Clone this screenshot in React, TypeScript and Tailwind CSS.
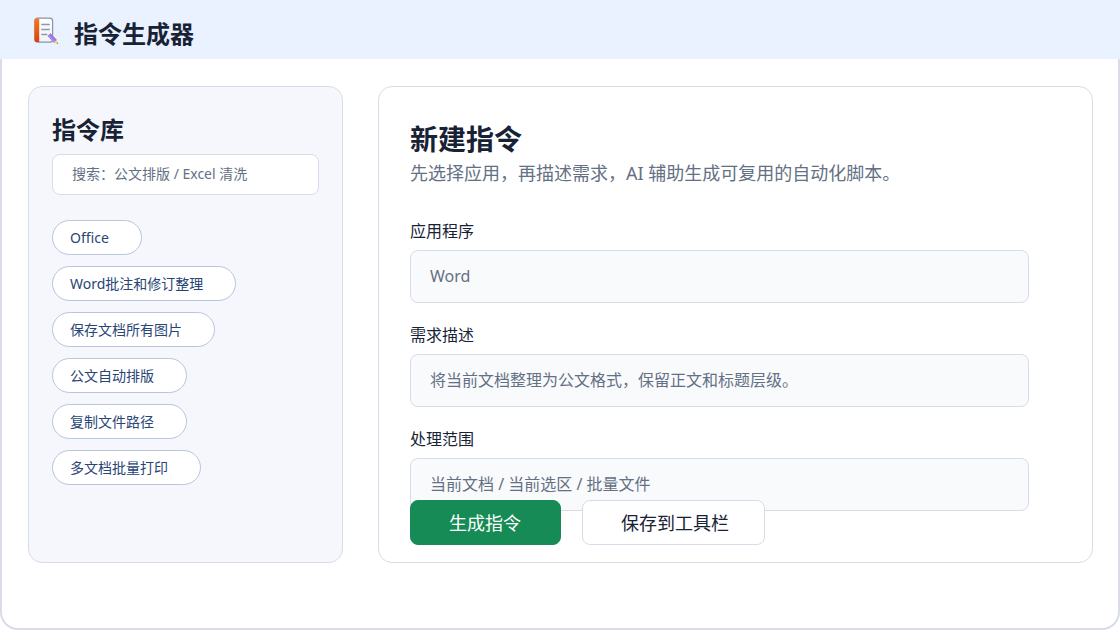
const presets = [
  'Office',
  'Word批注和修订整理',
  '保存文档所有图片',
  '公文自动排版',
  '复制文件路径',
  '多文档批量打印',
];

const fields = [
  { id: 'app', label: '应用程序', placeholder: 'Word' },
  { id: 'requirement', label: '需求描述', placeholder: '将当前文档整理为公文格式，保留正文和标题层级。' },
  { id: 'scope', label: '处理范围', placeholder: '当前文档 / 当前选区 / 批量文件' },
];

function NotebookIcon() {
  return (
    <svg width="28" height="28" viewBox="0 0 28 28" fill="none" aria-hidden="true">
      <defs>
        <linearGradient id="spine" x1="2" y1="2" x2="6" y2="26" gradientUnits="userSpaceOnUse">
          <stop stopColor="#fb7a1c" />
          <stop offset="1" stopColor="#dc3f08" />
        </linearGradient>
        <linearGradient id="paper" x1="6" y1="2" x2="20" y2="26" gradientUnits="userSpaceOnUse">
          <stop stopColor="#ffffff" />
          <stop offset="1" stopColor="#edf1f7" />
        </linearGradient>
      </defs>
      <rect x="2.8" y="2.200" width="17.8" height="24" rx="2.8" fill="url(#paper)" stroke="#8995a8" strokeWidth="1.2" />
      <path d="M4.400 2.600H7.200V26H4.400A1.900 1.900 0 0 1 2.500 24.100V4.500A1.900 1.900 0 0 1 4.400 2.600Z" fill="url(#spine)" />
      <path d="M9.800 8.500h7.500M9.800 13.500h7.500M9.800 18.500h5" stroke="#8f9bad" strokeWidth="1.300" strokeLinecap="round" />
      <path d="M17 18.600l6.300 6.600" stroke="#9a76dc" strokeWidth="4.200" />
      <path d="M16.500 19.400l6 6.300" stroke="#b094ea" strokeWidth="1.300" />
      <path d="M24.800 23.800l-3 2.900 4.400 1.300Z" fill="#efcf7d" />
      <path d="M25.700 26.600l-1.100 1 1.600.4Z" fill="#7a705c" />
    </svg>
  );
}

export default function App() {
  return (
    <div className="flex min-h-screen flex-col overflow-hidden bg-white font-['Noto_Sans','Noto_Sans_CJK_SC',sans-serif] text-[#182235]">
      {/* Header */}
      <header className="flex h-[59px] items-center gap-3.5 bg-[#eaf1ff] px-8">
        <NotebookIcon />
        <h1 className="pt-2 text-2xl font-bold">指令生成器</h1>
      </header>

      <main className="flex flex-1 gap-[35px] rounded-b-[18px] border-2 border-t-0 border-[#d8dde8] pt-[27px] pr-[25px] pb-[65px] pl-[26px]">
        {/* Library */}
        <aside className="w-[315px] shrink-0 rounded-[14px] border border-[#d7dde8] bg-[#f5f7fc] px-[23px] pt-[27px] pb-6">
          <h2 className="mb-2 text-2xl font-bold">指令库</h2>
          <input
            type="search"
            aria-label="搜索"
            placeholder="搜索：公文排版 / Excel 清洗"
            className="h-[41px] w-full rounded-lg border border-[#d7dde8] bg-white px-[19px] pb-0.5 text-sm placeholder:text-[#647084] focus:outline-none"
          />
          <div className="mt-[25px] flex flex-col items-start gap-[11px]">
            {presets.map((name) => (
              <button
                key={name}
                type="button"
                className="h-[35px] rounded-full border border-[#b7c5dd] bg-white pr-8 pl-[17px] text-sm text-[#294575]"
              >
                {name}
              </button>
            ))}
          </div>
        </aside>

        {/* New command */}
        <section className="min-w-0 flex-1 rounded-[14px] border border-[#d7dde8] bg-white pt-8 pr-[63px] pb-[17px] pl-[31px]">
          <h2 className="text-[28px] leading-10 font-bold">新建指令</h2>
          <p className="text-lg leading-7 text-[#647084]">
            先选择应用，再描述需求，AI 辅助生成可复用的自动化脚本。
          </p>

          <form onSubmit={(e) => e.preventDefault()}>
            <div className="flex flex-col gap-5 pt-8">
              {fields.map((field) => (
                <div key={field.id}>
                  <label htmlFor={field.id} className="mb-[7px] block text-base">
                    {field.label}
                  </label>
                  <input
                    id={field.id}
                    type="text"
                    placeholder={field.placeholder}
                    className="block h-[53px] w-full rounded-lg border border-[#d7dde8] bg-[#f9fafc] px-[19px] pb-0.5 text-base placeholder:text-[#647084] focus:outline-none"
                  />
                </div>
              ))}
            </div>

            {/* Actions sit over the bottom edge of the last field */}
            <div className="relative -mt-[11px] flex gap-[21px]">
              <button
                type="submit"
                className="h-[45px] w-[151px] rounded-lg border border-[#178b55] bg-[#178b55] pl-[38px] text-left text-lg text-white"
              >
                生成指令
              </button>
              <button
                type="button"
                className="h-[45px] w-[183px] rounded-lg border border-[#d7dde8] bg-white pl-[38px] text-left text-lg"
              >
                保存到工具栏
              </button>
            </div>
          </form>
        </section>
      </main>
    </div>
  );
}
